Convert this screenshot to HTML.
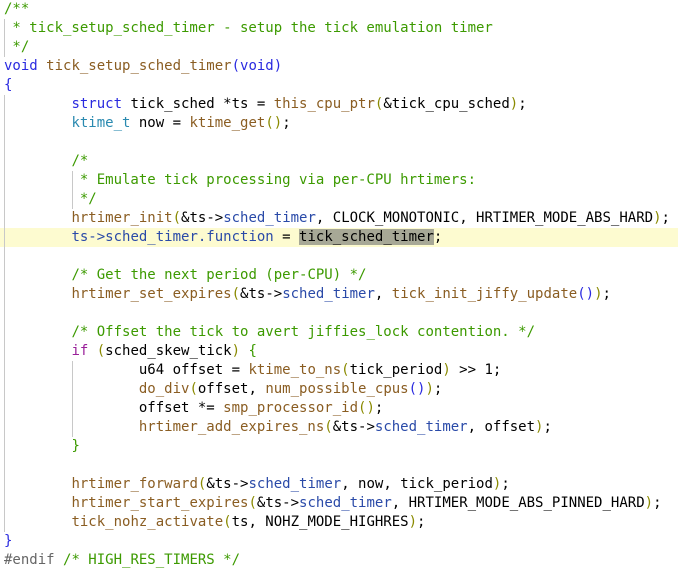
<!DOCTYPE html>
<html><head><meta charset="utf-8"><style>
body{margin:0;background:#fff;width:678px;height:572px;overflow:hidden;position:relative}
pre{margin:0;position:absolute;left:4px;top:0;font-family:"DejaVu Sans Mono","Liberation Mono",monospace;font-size:14px;line-height:19px;color:#000;z-index:2}
.c{color:#3c9a00}.k{color:#2a2ae0}.f{color:#8a5d22}.t{color:#2a8ab0}.m{color:#2a4aa8}.p{color:#9a209a}.g{color:#666}.b{color:#2a2ae0}.o{color:#8a8a00}.sel{background:#a7a896}
.hl{position:absolute;left:0;top:228px;width:678px;height:19px;background:#fdfbd0;z-index:1}
.v{position:absolute;width:1px;background:#c8c8c8;z-index:3}
</style></head><body>
<div class="hl"></div>
<div class="v" style="left:4px;top:19px;height:38px"></div>
<div class="v" style="left:4px;top:95px;height:437px"></div>
<div class="v" style="left:72px;top:171px;height:38px"></div>
<div class="v" style="left:72px;top:361px;height:76px"></div>
<pre><span class="c">/**
 * tick_setup_sched_timer - setup the tick emulation timer
 */</span>
<span class="k">void</span> <span class="f">tick_setup_sched_timer</span><span class="b">(void)</span>
<span class="b">{</span>
        <span class="k">struct</span> tick_sched *ts = <span class="f">this_cpu_ptr</span><span class="o">(</span>&amp;tick_cpu_sched<span class="o">)</span>;
        <span class="t">ktime_t</span> now = <span class="f">ktime_get</span><span class="o">()</span>;

        <span class="c">/*
         * Emulate tick processing via per-CPU hrtimers:
         */</span>
        <span class="f">hrtimer_init</span><span class="o">(</span>&amp;ts-&gt;<span class="m">sched_timer</span>, CLOCK_MONOTONIC, HRTIMER_MODE_ABS_HARD<span class="o">)</span>;
        <span class="m">ts-&gt;sched_timer.function</span> = <span class="sel">tick_sched_timer</span>;

        <span class="c">/* Get the next period (per-CPU) */</span>
        <span class="f">hrtimer_set_expires</span><span class="o">(</span>&amp;ts-&gt;<span class="m">sched_timer</span>, <span class="f">tick_init_jiffy_update</span><span class="b">()</span><span class="o">)</span>;

        <span class="c">/* Offset the tick to avert jiffies_lock contention. */</span>
        <span class="p">if</span> <span class="o">(</span>sched_skew_tick<span class="o">)</span> <span class="c">{</span>
                u64 offset = <span class="f">ktime_to_ns</span><span class="o">(</span>tick_period<span class="o">)</span> &gt;&gt; 1;
                <span class="f">do_div</span><span class="o">(</span>offset, <span class="f">num_possible_cpus</span><span class="b">()</span><span class="o">)</span>;
                offset *= <span class="f">smp_processor_id</span><span class="o">()</span>;
                <span class="f">hrtimer_add_expires_ns</span><span class="o">(</span>&amp;ts-&gt;<span class="m">sched_timer</span>, offset<span class="o">)</span>;
        <span class="c">}</span>

        <span class="f">hrtimer_forward</span><span class="o">(</span>&amp;ts-&gt;<span class="m">sched_timer</span>, now, tick_period<span class="o">)</span>;
        <span class="f">hrtimer_start_expires</span><span class="o">(</span>&amp;ts-&gt;<span class="m">sched_timer</span>, HRTIMER_MODE_ABS_PINNED_HARD<span class="o">)</span>;
        <span class="f">tick_nohz_activate</span><span class="o">(</span>ts, NOHZ_MODE_HIGHRES<span class="o">)</span>;
<span class="b">}</span>
<span class="g">#endif</span> <span class="c">/* HIGH_RES_TIMERS */</span></pre>
</body></html>
